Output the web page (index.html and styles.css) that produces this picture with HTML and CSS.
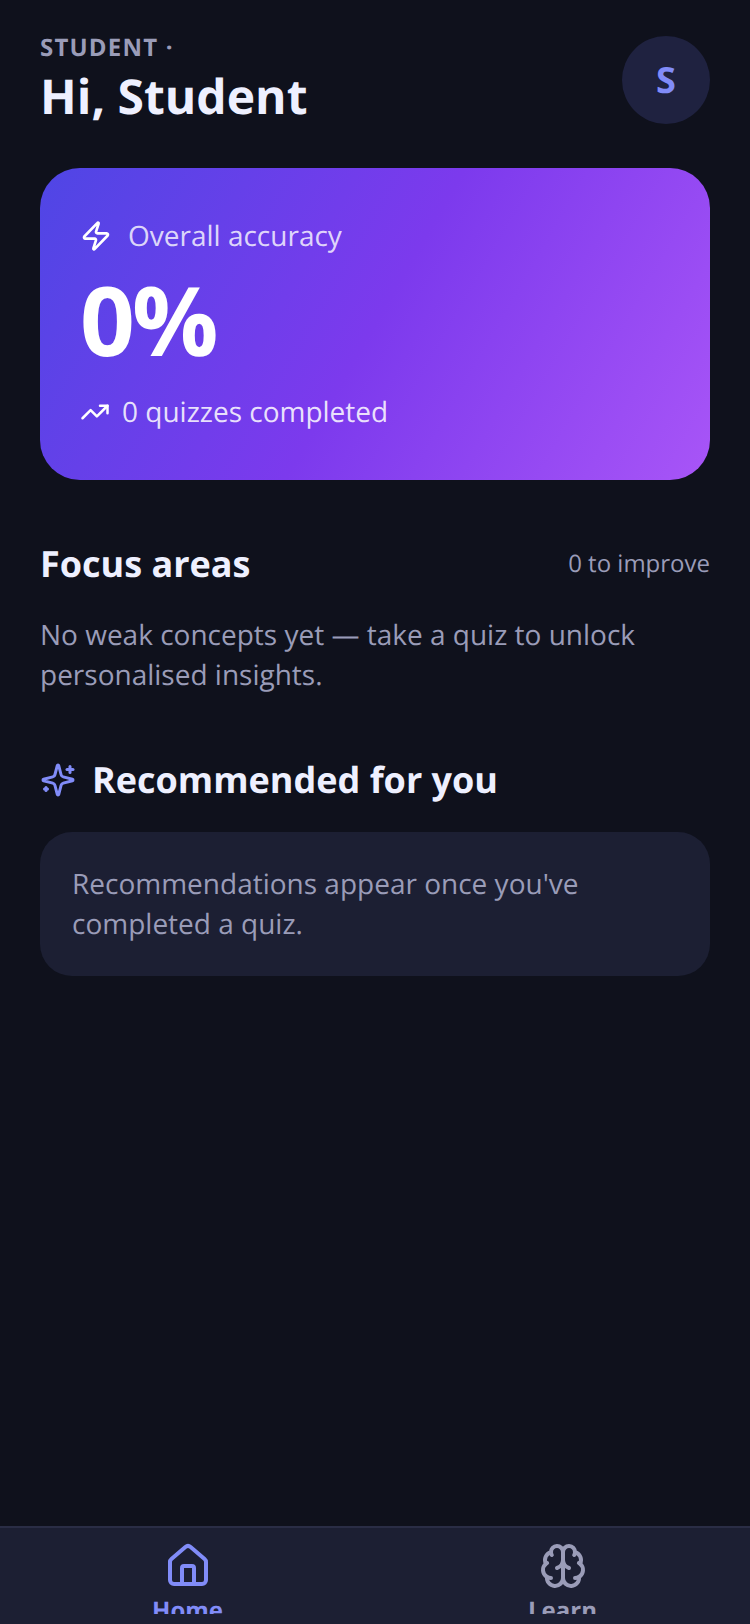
FILE: index.html
```html
<!DOCTYPE html>
<html>
<head>
  <title>Home</title>
  <link rel="stylesheet" href="styles.css">
</head>
<body>
  <div class="app">
    <main class="content">
      <div class="header">
        <div>
          <div class="role">STUDENT ·</div>
          <h1 class="greeting">Hi, Student</h1>
        </div>
        <div class="avatar">S</div>
      </div>

      <div class="score-card">
        <div class="score-label">
          <svg class="icon-zap" viewBox="0 0 24 24"><path d="M4 14a1 1 0 0 1-.78-1.63l9.9-10.2a.5.5 0 0 1 .86.46l-1.92 6.02A1 1 0 0 0 13 10h7a1 1 0 0 1 .78 1.63l-9.9 10.2a.5.5 0 0 1-.86-.46l1.92-6.02A1 1 0 0 0 11 14z"/></svg>
          <span>Overall accuracy</span>
        </div>
        <div class="score-value">0%</div>
        <div class="score-foot">
          <svg class="icon-trend" viewBox="0 0 24 24"><polyline points="22 7 13.5 15.5 8.5 10.5 2 17"/><polyline points="16 7 22 7 22 13"/></svg>
          <span>0 quizzes completed</span>
        </div>
      </div>

      <section class="focus">
        <div class="section-head">
          <h2>Focus areas</h2>
          <span class="section-meta">0 to improve</span>
        </div>
        <p class="muted">No weak concepts yet — take a quiz to unlock personalised insights.</p>
      </section>

      <section class="recs">
        <div class="recs-head">
          <svg class="icon-sparkles" viewBox="0 0 24 24"><path d="M9.937 15.5A2 2 0 0 0 8.5 14.063l-6.135-1.582a.5.5 0 0 1 0-.962L8.5 9.936A2 2 0 0 0 9.937 8.5l1.582-6.135a.5.5 0 0 1 .963 0L14.063 8.5A2 2 0 0 0 15.5 9.937l6.135 1.581a.5.5 0 0 1 0 .964L15.5 14.063a2 2 0 0 0-1.437 1.437l-1.582 6.135a.5.5 0 0 1-.963 0z"/><path d="M20 3v4"/><path d="M22 5h-4"/><path d="M4 17v2"/><path d="M5 18H3"/></svg>
          <h2>Recommended for you</h2>
        </div>
        <div class="recs-card">
          <p class="muted">Recommendations appear once you've completed a quiz.</p>
        </div>
      </section>
    </main>

    <nav class="tabbar">
      <div class="tab-row">
        <div class="tab tab-active">
          <svg class="tab-icon" viewBox="0 0 24 24"><path d="M15 21v-8a1 1 0 0 0-1-1h-4a1 1 0 0 0-1 1v8"/><path d="M3 10a2 2 0 0 1 .709-1.528l7-5.999a2 2 0 0 1 2.582 0l7 5.999A2 2 0 0 1 21 10v9a2 2 0 0 1-2 2H5a2 2 0 0 1-2-2z"/></svg>
          <span>Home</span>
        </div>
        <div class="tab">
          <svg class="tab-icon" viewBox="0 0 24 24"><path d="M12 5a3 3 0 1 0-5.997.125 4 4 0 0 0-2.526 5.77 4 4 0 0 0 .556 6.588A4 4 0 1 0 12 18Z"/><path d="M12 5a3 3 0 1 1 5.997.125 4 4 0 0 1 2.526 5.77 4 4 0 0 1-.556 6.588A4 4 0 1 1 12 18Z"/><path d="M15 13a4.5 4.5 0 0 1-3-4 4.5 4.5 0 0 1-3 4"/><path d="M17.599 6.5a3 3 0 0 0 .399-1.375"/><path d="M6.003 5.125A3 3 0 0 0 6.401 6.5"/><path d="M3.477 10.896a4 4 0 0 1 .585-.396"/><path d="M19.938 10.5a4 4 0 0 1 .585.396"/><path d="M6 18a4 4 0 0 1-1.967-.516"/><path d="M19.967 17.484A4 4 0 0 1 18 18"/></svg>
          <span>Learn</span>
        </div>
      </div>
    </nav>
  </div>
</body>
</html>
```

FILE: styles.css
```css
* {
  box-sizing: border-box;
}
body {
  margin: 0;
  background: #0f111c;
  font-family: "Open Sans", sans-serif;
  text-rendering: geometricPrecision;
}
svg {
  fill: none;
  stroke: currentColor;
  stroke-width: 2;
  stroke-linecap: round;
  stroke-linejoin: round;
  flex-shrink: 0;
}
h1, h2, p {
  margin: 0;
}
.app {
  height: 1624px;
  display: flex;
  flex-direction: column;
  overflow: hidden;
}
.content {
  flex: 1;
  padding: 36px 40px 0;
}
.header {
  display: flex;
  justify-content: space-between;
  align-items: flex-start;
}
.role {
  color: #9a9cb8;
  font-size: 24px;
  font-weight: 700;
  line-height: 22px;
  letter-spacing: 1.2px;
  margin-top: 1px;
}
.greeting {
  color: #eef0ff;
  font-size: 48px;
  font-weight: 700;
  line-height: 60px;
  margin-top: 8px;
}
.avatar {
  width: 88px;
  height: 88px;
  padding-bottom: 2px;
  border-radius: 50%;
  background: #1f2240;
  color: #818cf8;
  font-size: 36px;
  font-weight: 700;
  display: flex;
  align-items: center;
  justify-content: center;
}
.score-card {
  margin-top: 41px;
  height: 312px;
  padding: 50px 40px 0;
  border-radius: 40px;
  background: linear-gradient(120deg, #4f46e5 0%, #7c3aed 50%, #a855f7 100%);
  color: #fff;
}
.score-label {
  display: flex;
  align-items: center;
  gap: 16px;
  color: rgba(255, 255, 255, 0.8);
  font-size: 28px;
  line-height: 36px;
}
.icon-zap {
  width: 32px;
  height: 32px;
  color: #fff;
}
.score-value {
  font-size: 96px;
  font-weight: 700;
  line-height: 108px;
  letter-spacing: -3px;
  margin-top: 12px;
}
.score-foot {
  display: flex;
  align-items: center;
  gap: 12px;
  margin-top: 20px;
  color: rgba(255, 255, 255, 0.85);
  font-size: 28px;
  line-height: 36px;
}
.icon-trend {
  width: 30px;
  height: 30px;
  color: #fff;
}
.focus {
  margin-top: 58px;
}
.section-head {
  display: flex;
  justify-content: space-between;
  align-items: center;
}
h2 {
  color: #eef0ff;
  font-size: 36px;
  font-weight: 700;
  line-height: 52px;
}
.section-meta {
  color: #9a9cb8;
  font-size: 24px;
  padding-bottom: 2px;
}
.muted {
  color: #9a9cb8;
  font-size: 28px;
  line-height: 40px;
}
.focus .muted {
  margin-top: 25px;
}
.recs {
  margin-top: 59px;
}
.recs-head {
  display: flex;
  align-items: center;
  gap: 16px;
}
.icon-sparkles {
  width: 36px;
  height: 36px;
  color: #818cf8;
}
.recs-card {
  margin-top: 26px;
  padding: 32px 32px 32px;
  border-radius: 32px;
  background: #1c1f33;
}
.tabbar {
  height: 98px;
  padding-bottom: 10px;
  background: #1c1f33;
  border-top: 2px solid #2a2d45;
}
.tab-row {
  height: 86px;
  display: flex;
  overflow: hidden;
}
.tab {
  flex: 1;
  display: flex;
  flex-direction: column;
  align-items: center;
  padding-top: 14px;
  color: #9a9cb8;
  font-size: 24px;
  font-weight: 700;
  line-height: 32px;
}
.tab-active {
  color: #818cf8;
}
.tab-icon {
  width: 48px;
  height: 48px;
  margin-bottom: 5px;
}
```
